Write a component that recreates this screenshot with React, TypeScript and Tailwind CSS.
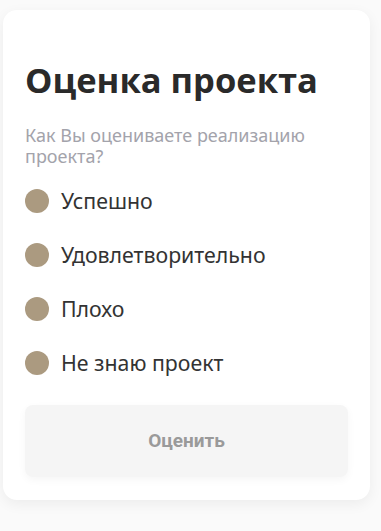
import { useState } from "react";

const options = ["Успешно", "Удовлетворительно", "Плохо", "Не знаю проект"];

export default function App() {
  const [value, setValue] = useState<string | null>(null);

  return (
    <div className="min-h-[531px] w-[381px] bg-[#fafafa] pt-[10px] pl-[3px]">
      <div className="w-[367px] rounded-[14px] bg-white px-[22px] pt-[48px] pb-[23px] shadow-[0_4px_14px_rgba(0,0,0,0.06)]">
        <h1 className="font-['Open_Sans',sans-serif] text-[34.5px] font-bold leading-[44px] text-[#2a2a2a]">
          Оценка проекта
        </h1>
        <p className="mt-[23px] font-['Noto_Sans',sans-serif] text-[18px] leading-[21px] text-[#a3a3ab]">
          Как Вы оцениваете реализацию проекта?
        </p>
        <div className="mt-[22px] flex flex-col gap-[30px]">
          {options.map((o) => (
            <label key={o} className="flex h-[24px] cursor-pointer items-center gap-[12px]" onClick={() => setValue(o)}>
              <span className="h-[24px] w-[24px] shrink-0 rounded-full bg-[#ab9a80]" />
              <span className="font-['Noto_Sans',sans-serif] text-[21.3px] leading-[24px] text-[#333]">{o}</span>
            </label>
          ))}
        </div>
        <button
          disabled={!value}
          className="mt-[30px] flex h-[72px] w-[323px] items-center justify-center rounded-[8px] bg-[#f5f5f5] font-['Roboto',sans-serif] text-[19px] font-bold text-[#9a9a9a] shadow-[0_3px_8px_rgba(0,0,0,0.04)]"
        >
          Оценить
        </button>
      </div>
    </div>
  );
}
